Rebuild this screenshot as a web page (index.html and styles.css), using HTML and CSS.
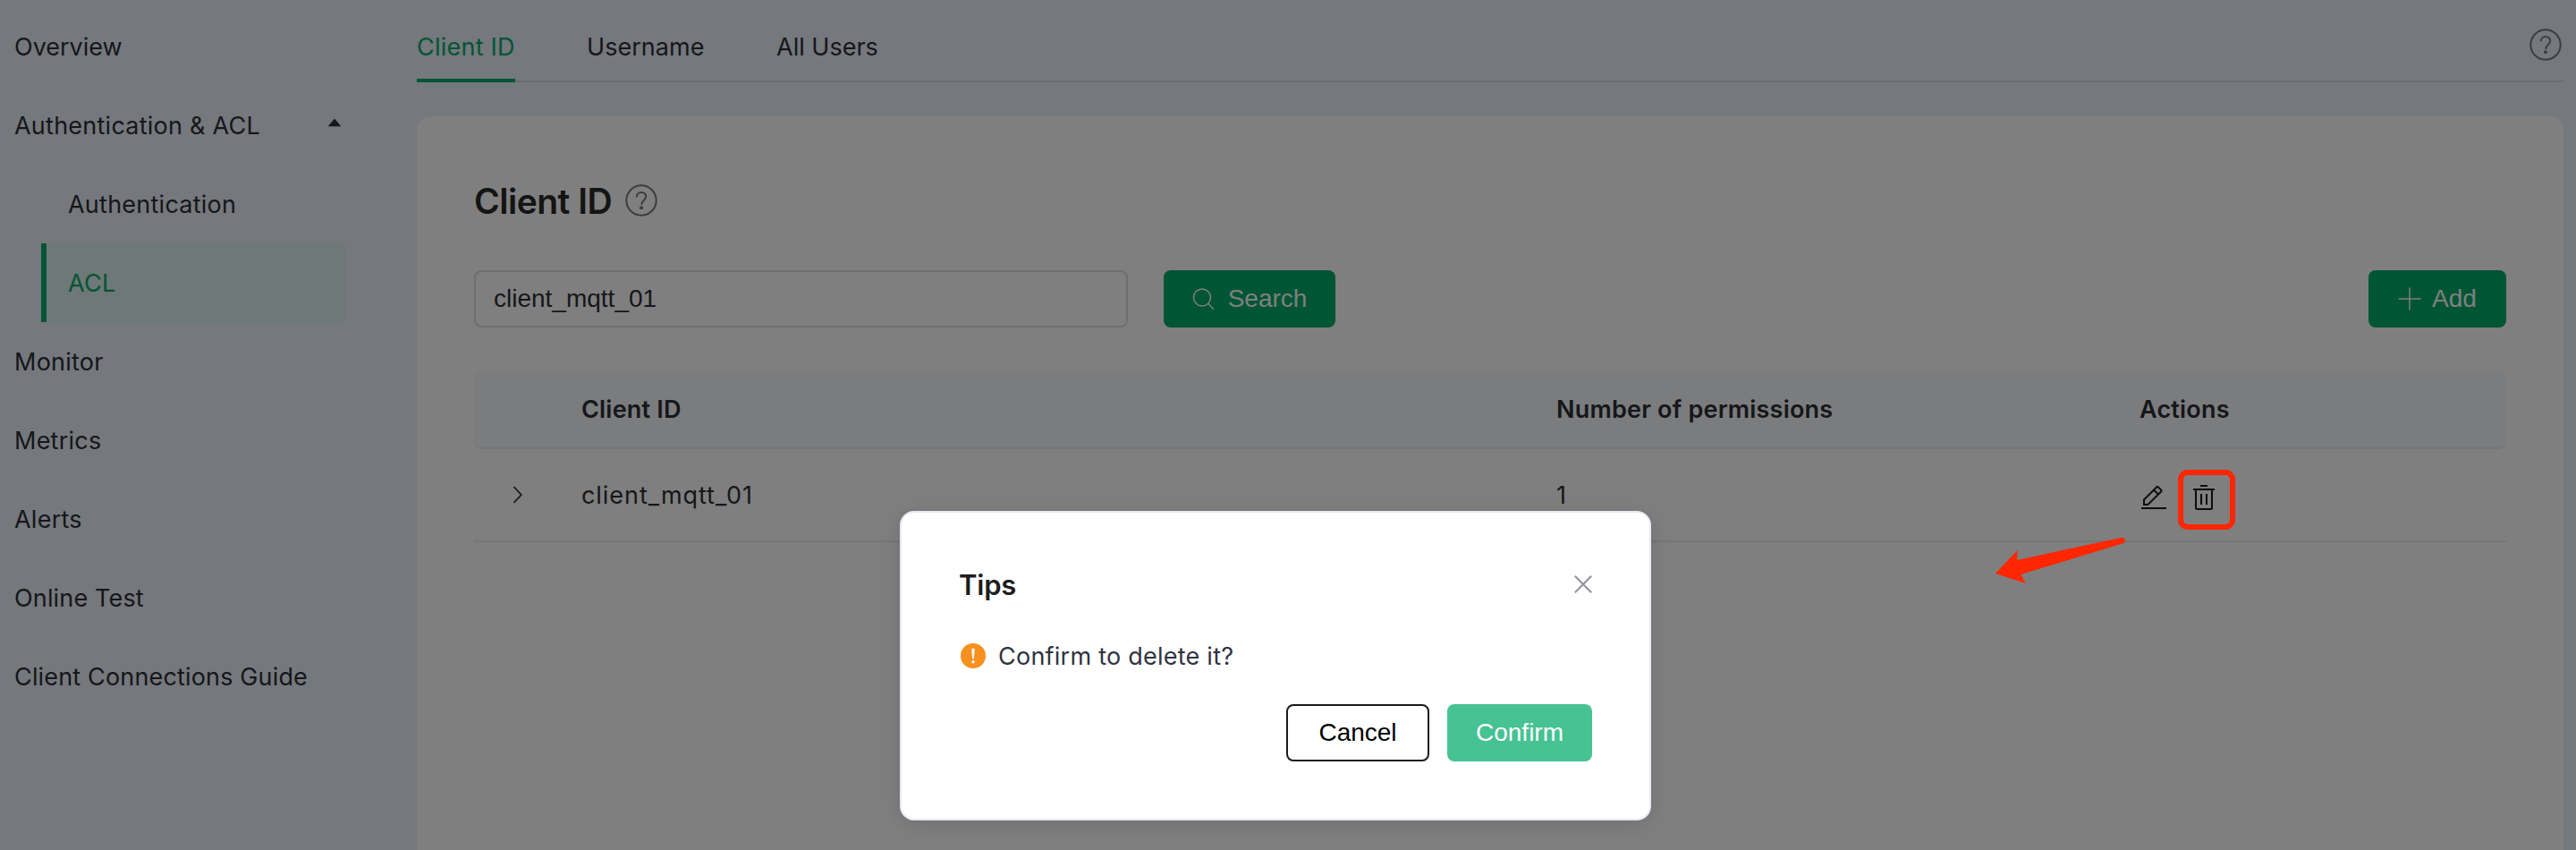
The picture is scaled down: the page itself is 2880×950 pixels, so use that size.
FILE: index.html
```html
<!DOCTYPE html>
<html lang="en">
<head>
<meta charset="utf-8">
<title>Client ID ACL</title>
<link rel="stylesheet" href="styles.css">
</head>
<body>
<div class="app">
  <nav class="sidebar">
    <a class="nav-item nav-first">Overview</a>
    <a class="nav-item nav-group"><span>Authentication &amp; ACL</span><svg class="caret" viewBox="0 0 16 10"><path d="M8 .5 15.300 9.200H.700z"/></svg></a>
    <a class="nav-item nav-sub">Authentication</a>
    <a class="nav-item nav-sub active">ACL</a>
    <a class="nav-item">Monitor</a>
    <a class="nav-item">Metrics</a>
    <a class="nav-item">Alerts</a>
    <a class="nav-item nav-tight">Online Test</a>
    <a class="nav-item nav-tight">Client Connections Guide</a>
  </nav>
  <main class="main">
    <header class="tabs">
      <a class="tab active">Client ID</a>
      <a class="tab tab-user">Username</a>
      <a class="tab tab-all">All Users</a>
      <svg class="help" viewBox="0 0 36 36"><circle cx="18" cy="18" r="16.700"/><path d="M12.800 14.200c0-3.200 2.200-5.200 5.200-5.200s5.200 2 5.200 4.800c0 3.800-5 4.300-5 9.200"/><circle class="dot" cx="18" cy="26.200" r="2"/></svg>
    </header>
    <section class="card">
      <div class="title-row">
        <h1 class="title">Client ID</h1>
        <svg class="help" viewBox="0 0 36 36"><circle cx="18" cy="18" r="16.700"/><path d="M12.800 14.200c0-3.200 2.200-5.200 5.200-5.200s5.200 2 5.200 4.800c0 3.800-5 4.300-5 9.200"/><circle class="dot" cx="18" cy="26.200" r="2"/></svg>
      </div>
      <div class="toolbar">
        <div class="input">client_mqtt_01</div>
        <button class="btn btn-search"><svg class="search-icon" viewBox="0 0 26 26"><circle cx="11" cy="11.500" r="9.500"/><path d="m17.700 18.200 6.300 6.500"/></svg>Search</button>
        <button class="btn btn-add"><svg class="plus-icon" viewBox="0 0 26 26"><path d="M13 .5v25M.5 13h25"/></svg>Add</button>
      </div>
      <div class="table">
        <div class="row head"><span></span><span>Client ID</span><span>Number of permissions</span><span>Actions</span></div>
        <div class="row">
          <svg class="chevron" viewBox="0 0 12 20"><path d="m1.500 1.200 8.300 8.800-8.300 8.800"/></svg>
          <span class="td-client">client_mqtt_01</span>
          <span class="td-num">1</span>
          <span class="actions">
            <svg class="edit" viewBox="0 0 28 28"><path d="M0 26h28M3 16.500 17.300 2.200q.7-.7 1.400 0l3.600 3.600q.7.700 0 1.400L8 21.500l-1.300.5H3zM14 5.500l5 5"/></svg>
            <svg class="trash" viewBox="0 0 24 28"><path d="M8 1h8M0 5h24M3 5v20.500q0 1.500 1.500 1.500h15q1.500 0 1.500-1.500V5M9 10v12M15 10v12"/></svg>
          </span>
        </div>
      </div>
    </section>
  </main>
</div>
<div class="overlay">
  <div class="dialog">
    <div class="dialog-head"><span class="dialog-title">Tips</span><svg class="close" viewBox="0 0 20 20"><path d="m.8.800 18.400 18.400M19.200.800.800 19.200"/></svg></div>
    <div class="dialog-body"><svg class="warn" viewBox="0 0 28 28"><circle cx="14" cy="14" r="14"/><path d="M12.300 7.200a1.700 1.700 0 0 1 3.400 0L15 16.500a1 1 0 0 1-2 0z"/><circle class="mark" cx="14" cy="20.700" r="1.700"/></svg><span>Confirm to delete it?</span></div>
    <div class="dialog-foot"><button class="btn btn-cancel">Cancel</button><button class="btn btn-confirm">Confirm</button></div>
  </div>
</div>
<div class="mark-box"></div>
<svg class="mark-arrow" viewBox="0 0 150 56"><path d="M2.700 42 27.700 16 27 27 143.500 2a3.200 3.200 0 0 1 2 6.300L31.300 43 37 53z"/></svg>
</body>
</html>
```
FILE: styles.css
```css
* { box-sizing: border-box; }
body {
  margin: 0;
  height: 950px;
  overflow: hidden;
  position: relative;
  background: #ebf1fb;
  color: #2c2f35;
  font: 400 27px/40px Inter, "Noto Sans", sans-serif;
  letter-spacing: .24px;
}
.app { display: flex; height: 950px; }
svg { display: block; flex: none; fill: none; stroke: currentColor; }

.sidebar { width: 466px; padding: 8px 80px 0 0; flex: none; }
.nav-item { display: flex; align-items: center; height: 88px; padding: 2px 0 0 16px; white-space: nowrap; }
.nav-first { letter-spacing: 0; }
.nav-tight { letter-spacing: .16px; }
.nav-group { justify-content: space-between; padding-right: 4px; }
.caret { width: 16px; height: 10px; fill: currentColor; stroke: none; margin-top: -8px; }
.nav-sub { margin-left: 46px; padding-left: 24px; border-left: 6px solid transparent; }
.nav-sub.active { color: #00aa68; border-left-color: #00aa68; background: #dff0f0; }

.main { flex: 1; padding-right: 14px; display: flex; flex-direction: column; }
.tabs { display: flex; height: 92px; flex: none; gap: 80px; border-bottom: 2px solid #d5dbdb; }
.tab { height: 92px; padding-top: 33px; border-bottom: 4px solid transparent; white-space: nowrap; width: 110px; }
.tab-user { width: 132px; letter-spacing: .05px; }
.tab-all { letter-spacing: 0; }
.tab.active { color: #00aa68; border-bottom-color: #00aa68; }
.help { width: 36px; height: 36px; color: #77797c; stroke-width: 2; }
.help .dot { fill: currentColor; stroke: none; }
.tabs .help { margin: 32px 2px 0 auto; }

.card { margin-top: 38px; flex: 1; background: #fff; border-radius: 16px 16px 0 0; padding: 64px; }
.title-row { display: flex; align-items: center; height: 60px; gap: 14px; }
.title { margin: 0; padding-top: 2px; width: 155px; font-size: 39px; font-weight: 620; line-height: 60px; letter-spacing: -.5px; color: #282828; white-space: nowrap; }
.toolbar { display: flex; margin-top: 48px; }
.input { width: 731px; height: 64px; border: 2px solid #dcdce4; border-radius: 8px; padding-left: 20px; font: 28px/60px "Liberation Sans", Arial, sans-serif; letter-spacing: 0; }
.btn { display: flex; align-items: center; justify-content: center; height: 64px; padding: 0; border: 0; border-radius: 8px; background: #00aa68; color: #fff; font: 28px/60px "Liberation Sans", Arial, sans-serif; white-space: nowrap; }
.btn-search { width: 192px; margin-left: 40px; gap: 14px; }
.btn-add { width: 154px; margin-left: auto; gap: 12px; }
.search-icon, .plus-icon { width: 26px; height: 26px; stroke-width: 1.500; }

.table { margin-top: 48px; }
.row { display: grid; grid-template-columns: 120px 1090px 652px 1fr; align-items: center; height: 104px; border-bottom: 2px solid #eaeaf4; }
.row.head { height: 88px; padding-top: 2px; background: #f6f8fc; border-radius: 8px; font-weight: 570; letter-spacing: .2px; }
.chevron { width: 12px; height: 20px; margin-left: 43px; stroke-width: 1.700; }
.td-client { letter-spacing: .950px; padding-top: 1px; }
.td-num { padding-top: 1px; }
.actions { display: flex; gap: 30px; padding: 6px 0 0 2px; color: #181818; stroke-width: 2; }
.actions svg { height: 28px; }
.edit { width: 28px; }
.trash { width: 24px; }

.overlay { position: absolute; inset: 0; background: rgba(0, 0, 0, .5); }
.dialog { position: absolute; left: 1006px; top: 571px; width: 840px; height: 346px; padding: 58px 64px 64px; border: 2px solid #e6eaf4; border-radius: 16px; background: #fff; box-shadow: 0 4px 24px rgba(0, 0, 0, .12); }
.dialog-head { display: flex; justify-content: space-between; align-items: center; height: 44px; }
.dialog-title { padding-top: 2px; font-size: 31px; font-weight: 570; letter-spacing: -.2px; color: #1d1d1d; }
.close { width: 20px; height: 20px; color: #909399; stroke-width: 2; }
.dialog-body { display: flex; align-items: center; height: 40px; margin-top: 38px; padding-left: 2px; gap: 14px; color: #303340; }
.dialog-body span { padding-top: 2px; }
.warn { width: 28px; height: 28px; fill: #f7901e; stroke: none; }
.warn path, .warn .mark { fill: #fff; }
.dialog-foot { display: flex; justify-content: flex-end; gap: 20px; margin-top: 34px; }
.btn-cancel { width: 160px; border: 2px solid #1a1a1a; background: #fff; color: #000; }
.btn-confirm { width: 162px; background: #46c293; }

.mark-box { position: absolute; left: 2435px; top: 525px; width: 64px; height: 67px; border: 6px solid #ff2600; border-radius: 11px; }
.mark-arrow { position: absolute; left: 2228px; top: 599px; width: 150px; height: 56px; fill: #ff2600; stroke: none; }
```
